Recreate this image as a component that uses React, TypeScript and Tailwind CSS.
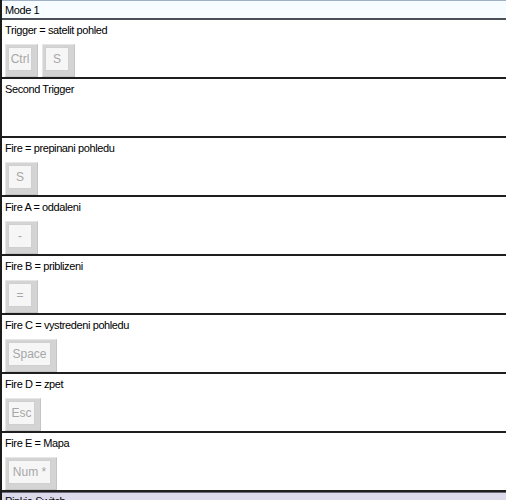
import React from 'react'

type Section = {
  title: string
  keys: { label: string; w: string }[]
}

const sections: Section[] = [
  { title: 'Trigger = satelit pohled', keys: [{ label: 'Ctrl', w: 'w-[33px]' }, { label: 'S', w: 'w-[33px]' }] },
  { title: 'Second Trigger', keys: [] },
  { title: 'Fire = prepinani pohledu', keys: [{ label: 'S', w: 'w-[33px]' }] },
  { title: 'Fire A = oddaleni', keys: [{ label: '-', w: 'w-[33px]' }] },
  { title: 'Fire B = priblizeni', keys: [{ label: '=', w: 'w-[33px]' }] },
  { title: 'Fire C = vystredeni pohledu', keys: [{ label: 'Space', w: 'w-[52px]' }] },
  { title: 'Fire D = zpet', keys: [{ label: 'Esc', w: 'w-[36px]' }] },
  { title: 'Fire E = Mapa', keys: [{ label: 'Num *', w: 'w-[52px]' }] }
]

function KeyCap({ label, w }: { label: string; w: string }) {
  return (
    <div className={`${w} h-[33px] bg-[#d4d4d4] pt-[2px] pl-[2px] pr-[5px] pb-[5px] border-t border-l border-[#e6e6e6] border-r border-b border-r-[#c4c4c4] border-b-[#c4c4c4]`}>
      <div className="h-full w-full bg-[#f6f6f6] border border-[#d0d0d0] flex items-center justify-center text-[12px] text-[#a6a6a6]">
        {label}
      </div>
    </div>
  )
}

export default function App() {
  return (
    <div
      className="w-[506px] h-[500px] overflow-hidden bg-white text-black text-[11px] leading-[13px] tracking-[-0.4px] border-l-2 border-[#1c1c1c]"
      style={{ fontFamily: '"Liberation Sans", Arial, sans-serif' }}
    >
      {/* header */}
      <div className="h-[20px] bg-[#f6fcff] border-t border-[#9fb0c2] border-b-2 border-b-[#4b5058] pl-[3px] pt-[3px]">
        Mode 1
      </div>

      {sections.map((s) => (
        <div key={s.title} className="h-[59px] border-b-2 border-b-[#1e1e1e] flex flex-col">
          <div className="pl-[3px] pt-[4px] h-[24px]">{s.title}</div>
          <div className="flex gap-[4px] pl-[3px] tracking-normal">
            {s.keys.map((k, i) => (
              <KeyCap key={i} label={k.label} w={k.w} />
            ))}
          </div>
        </div>
      ))}

      {/* next mode section, cut off */}
      <div className="h-[20px] bg-[#dcdaea] border-t border-[#6a6a78] pl-[3px] pt-[2px]">Pinkie Switch</div>
    </div>
  )
}
